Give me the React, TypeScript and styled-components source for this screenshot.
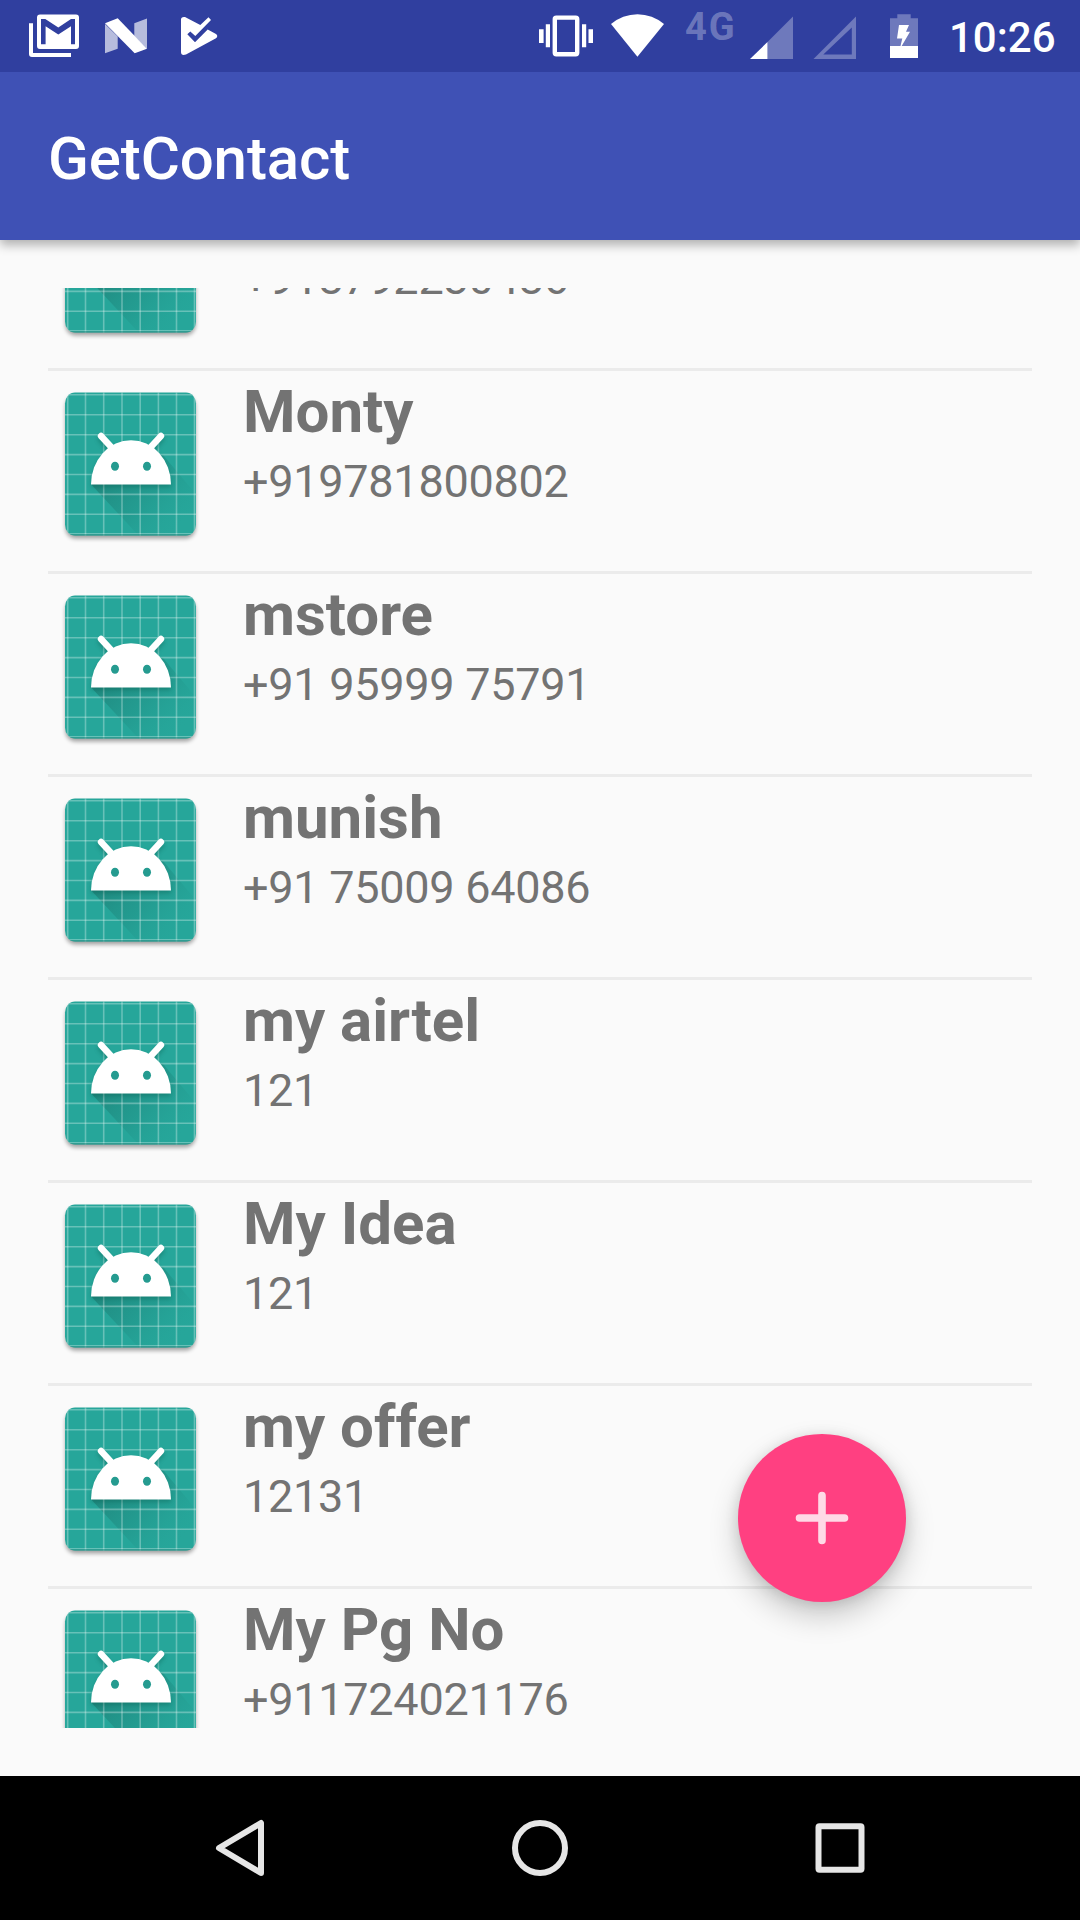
import React from 'react';
import styled, { createGlobalStyle } from 'styled-components';

const GlobalStyle = createGlobalStyle`
  * { box-sizing: border-box; }
  body { margin: 0; background: #fafafa; font-family: Roboto, sans-serif; }
  svg { display: block; flex: none; }
`;

const Screen = styled.div`
  position: relative;
  display: flex;
  flex-direction: column;
  width: 1080px;
  height: 1920px;
  overflow: hidden;
  background: #fafafa;
`;

const StatusBar = styled.header`
  position: relative;
  z-index: 1;
  display: flex;
  justify-content: space-between;
  height: 72px;
  flex: none;
  padding: 0 24px;
  background: #303f9f;
  color: #fff;
`;

const StatusGroup = styled.div<{ $gap: number }>`
  display: flex;
  gap: ${({ $gap }) => $gap}px;
`;

const Notifications = styled(StatusGroup)`
  margin-left: 20px;
`;

const Network = styled.span`
  width: 52px;
  padding-top: 5px;
  font-size: 38px;
  font-weight: 700;
  line-height: 44px;
  letter-spacing: 2px;
  white-space: nowrap;
  color: rgba(255, 255, 255, 0.3);
`;

const Clock = styled.time`
  width: 107px;
  margin-left: -2px;
  font-size: 42px;
  font-weight: 500;
  line-height: 76px;
  white-space: nowrap;
`;

const AppBar = styled.div`
  display: flex;
  align-items: center;
  flex: none;
  height: 168px;
  padding: 6px 48px 0;
  background: #3f51b5;
  box-shadow: 0 5px 10px rgba(0, 0, 0, 0.3);
`;

const Title = styled.h1`
  margin: 0;
  font-size: 60px;
  font-weight: 500;
  line-height: 72px;
  letter-spacing: -0.12px;
  color: #fff;
`;

const Content = styled.main`
  flex: 1;
  min-height: 0;
  padding: 48px;
`;

const List = styled.ul`
  height: 1440px;
  margin: 0;
  padding: 0;
  overflow: hidden;
  list-style: none;
`;

const Contact = styled.li<{ $scrolled?: boolean }>`
  display: flex;
  gap: 35px;
  height: 203px;
  margin-top: ${({ $scrolled }) => ($scrolled ? -120 : 0)}px;
  border-bottom: 3px solid #ebebeb;
`;

const Details = styled.div`
  display: flex;
  flex-direction: column;
  padding-top: 6px;
  color: #737373;
  white-space: nowrap;
`;

const Name = styled.span`
  height: 70px;
  font-size: 60px;
  font-weight: 700;
  line-height: 70px;
`;

const Phone = styled.span`
  margin-top: 8px;
  font-size: 45px;
  line-height: 53px;
  letter-spacing: -0.27px;
`;

const Fab = styled.button`
  position: absolute;
  left: 738px;
  top: 1434px;
  display: flex;
  align-items: center;
  justify-content: center;
  width: 168px;
  height: 168px;
  padding: 0;
  border: 0;
  border-radius: 50%;
  background: #ff4081;
  box-shadow: 0 14px 30px rgba(0, 0, 0, 0.2), 0 2px 14px rgba(0, 0, 0, 0.12);
`;

const NavBar = styled.nav`
  display: flex;
  flex: none;
  height: 144px;
  padding: 0 90px;
  background: #000;
`;

const NavButton = styled.div`
  display: flex;
  flex: 1;
  align-items: center;
  justify-content: center;
`;

const GRID_X = [19.7, 37.5, 55.7, 74, 92.2, 110.4, 128.5, 146.5];
const GRID_Y = [23.7, 43.7, 63.7, 83.6, 103.5, 123.4, 143.3, 162.7];

const Avatar = () => (
  <svg width="160" height="200" viewBox="0 0 160 200">
    <defs>
      <linearGradient id="cast" gradientUnits="userSpaceOnUse" x1="60" y1="90" x2="130" y2="160">
        <stop offset="0" stopColor="#1c7c72" stopOpacity="0.75" />
        <stop offset="0.55" stopColor="#1f8a80" stopOpacity="0.35" />
        <stop offset="1" stopColor="#26a69a" stopOpacity="0" />
      </linearGradient>
      <filter id="soft" x="-30%" y="-30%" width="160%" height="160%">
        <feGaussianBlur stdDeviation="2.2" />
      </filter>
      <clipPath id="tile">
        <rect x="17" y="21.5" width="131" height="143" rx="10" ry="11" />
      </clipPath>
    </defs>
    <rect x="17.5" y="25" width="130" height="142.5" rx="10" fill="#000" opacity="0.36" filter="url(#soft)" />
    <rect x="17" y="21.5" width="131" height="143" rx="10" ry="11" fill="#26a69a" />
    <g clipPath="url(#tile)">
      <path d="M43 113.3L92 166H152V128L115 84L83 80Z" fill="url(#cast)" />
      <g stroke="#fff" strokeOpacity="0.3" strokeWidth="1.6">
        {GRID_X.map((x) => (
          <path key={x} d={`M${x} 21V165`} />
        ))}
        {GRID_Y.map((y) => (
          <path key={y} d={`M17 ${y}H148`} />
        ))}
      </g>
      <path d="M17 164H148" stroke="#1b877c" strokeWidth="1.2" />
      <g opacity="0.3" filter="url(#soft)" transform="translate(0 3)">
        <path d="M43 113.3A40 44.3 0 0 1 123 113.3Z" fill="#004d40" />
        <path d="M52.7 65L64 78M113.3 65L102 78" stroke="#004d40" strokeWidth="6" strokeLinecap="round" />
      </g>
      <path fill="#fff" d="M43 113.5A40 44.3 0 0 1 123 113.5Z" />
      <path d="M53 65L65 78M113 65L101 78" stroke="#fff" strokeWidth="6.4" strokeLinecap="round" />
      <ellipse cx="67" cy="95.3" rx="4" ry="4.5" fill="#259b90" />
      <ellipse cx="99" cy="95.3" rx="4" ry="4.5" fill="#259b90" />
    </g>
  </svg>
);

const GmailIcon = () => (
  <svg width="60" height="72" viewBox="24 0 60 72" fill="#fff">
    <path d="M29 23.3H33V53H71V57H32Q29 57 29 54Z" />
    <path
      fillRule="evenodd"
      d="M40 14.5H76Q79 14.5 79 17.5V46Q79 49 76 49H40Q37 49 37 46V17.5Q37 14.5 40 14.5ZM41 19V44.3H45.6V26.3L58.3 34.5L71 26.3V44.3H75V19H71L58.3 27.6L45.3 19Z"
    />
  </svg>
);

const NougatIcon = () => (
  <svg width="44" height="72" viewBox="104 0 44 72" fill="#fff">
    <path opacity="0.65" d="M105 24L117.7 36.5V48.7L105 53.3ZM134.3 23.3L147 18.5V48.7L134.3 36Z" />
    <path d="M105 23.3L117.7 18.3L147 48.7L134.7 53.3Z" />
  </svg>
);

const PlayCheckIcon = () => (
  <svg width="40" height="72" viewBox="180 0 40 72" fill="#fff">
    <path d="M181 19.5Q181 16.5 185 17L200.3 25L208.5 17.2L211 20L195.3 36L190.3 31.5L187.3 34.3L195 42.3L207.7 29.5L216 34Q218.5 36 216 38.3L186 54.5Q181 56 181 52Z" />
  </svg>
);

const VibrateIcon = () => (
  <svg width="56" height="72" viewBox="538 0 56 72" fill="#fff">
    <rect x="554.8" y="17.6" width="22.4" height="36.6" rx="1.5" fill="none" stroke="#fff" strokeWidth="4.4" />
    <path d="M545.8 24.3H550V47.3H545.8ZM582 24.3H586.2V47.3H582ZM539 29.3H543.6V43H539ZM588.5 29.3H593V43H588.5Z" />
  </svg>
);

const WifiIcon = () => (
  <svg width="56" height="72" viewBox="610 0 56 72" fill="#fff">
    <path d="M611 24A40.6 40.6 0 0 1 664 24L637.4 56.8Z" />
  </svg>
);

const SignalIcon = () => (
  <svg width="44" height="72" viewBox="750 0 44 72" fill="#fff">
    <path opacity="0.3" d="M767.5 42V59H793V16.5Z" />
    <path d="M750 59L767.5 42V59Z" />
  </svg>
);

const NoSignalIcon = () => (
  <svg width="44" height="72" viewBox="813 0 44 72" fill="#fff">
    <path opacity="0.3" fillRule="evenodd" d="M813.5 59L856 16.5V59ZM823.3 54.6H851.8V27.5Z" />
  </svg>
);

const BatteryIcon = () => (
  <svg width="28" height="72" viewBox="890 0 28 72" fill="#fff">
    <path opacity="0.3" d="M890 46V18.3H897.3V14.3H910.7V18.3H918V46Z" />
    <path d="M890 46H918V58H890ZM899 25H909L906 31.7H910L901.7 46H900.5L902.3 38.5H897Z" />
  </svg>
);

const contacts = [
  { name: '', phone: '+918792230486' },
  { name: 'Monty', phone: '+919781800802' },
  { name: 'mstore', phone: '+91 95999 75791' },
  { name: 'munish', phone: '+91 75009 64086' },
  { name: 'my airtel', phone: '121' },
  { name: 'My Idea', phone: '121' },
  { name: 'my offer', phone: '12131' },
  { name: 'My Pg No', phone: '+911724021176' },
];

export default function App() {
  return (
    <Screen>
      <GlobalStyle />
      <StatusBar>
        <StatusGroup $gap={0}>
          <GmailIcon />
          <Notifications $gap={32}>
            <NougatIcon />
            <PlayCheckIcon />
          </Notifications>
        </StatusGroup>
        <StatusGroup $gap={33}>
          <StatusGroup $gap={19}>
            <StatusGroup $gap={16}>
              <VibrateIcon />
              <WifiIcon />
            </StatusGroup>
            <StatusGroup $gap={13}>
              <Network>4G</Network>
              <StatusGroup $gap={19}>
                <SignalIcon />
                <NoSignalIcon />
              </StatusGroup>
            </StatusGroup>
          </StatusGroup>
          <BatteryIcon />
          <Clock>10:26</Clock>
        </StatusGroup>
      </StatusBar>
      <AppBar>
        <Title>GetContact</Title>
      </AppBar>
      <Content>
        <List>
          {contacts.map((c, i) => (
            <Contact key={c.phone + c.name} $scrolled={i === 0}>
              <Avatar />
              <Details>
                <Name>{c.name}</Name>
                <Phone>{c.phone}</Phone>
              </Details>
            </Contact>
          ))}
        </List>
      </Content>
      <Fab aria-label="Add">
        <svg width="72" height="72" viewBox="0 0 72 72">
          <path d="M36 13.5V58.5M13.5 36H58.5" stroke="#ffd9e6" strokeWidth="7.6" strokeLinecap="round" fill="none" />
        </svg>
      </Fab>
      <NavBar>
        <NavButton>
          <svg width="60" height="60" viewBox="0 0 60 60">
            <path d="M51 5V55L9 30Z" fill="none" stroke="#e6e6e6" strokeWidth="6" strokeLinejoin="round" />
          </svg>
        </NavButton>
        <NavButton>
          <svg width="60" height="60" viewBox="0 0 60 60">
            <circle cx="30" cy="30" r="25" fill="none" stroke="#e6e6e6" strokeWidth="6" />
          </svg>
        </NavButton>
        <NavButton>
          <svg width="60" height="60" viewBox="0 0 60 60">
            <rect x="8.5" y="8.2" width="43" height="43.6" rx="1" fill="none" stroke="#e6e6e6" strokeWidth="6" strokeLinejoin="round" />
          </svg>
        </NavButton>
      </NavBar>
    </Screen>
  );
}
